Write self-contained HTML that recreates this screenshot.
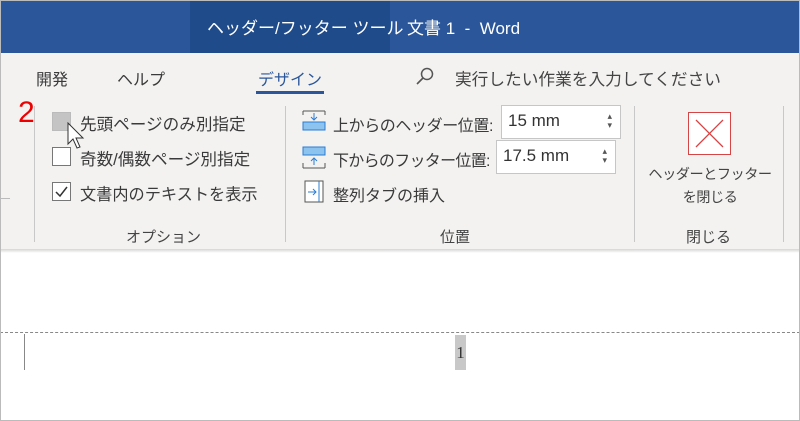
<!DOCTYPE html>
<html><head><meta charset="utf-8"><style>
*{margin:0;padding:0;box-sizing:border-box}
body{width:800px;height:421px;overflow:hidden;background:#fff;font-family:"Liberation Sans","Noto Sans CJK JP",sans-serif;color:#333;position:relative}
.a{position:absolute;white-space:nowrap}
.t{font-size:16px;color:#3a3a3a}
.c{font-size:16.6px;color:#3a3a3a}
.cb{position:absolute;width:19px;height:19px;border:1px solid #777;background:#fff}
.sep{position:absolute;width:1px;background:#c8c8c8}
.inp{position:absolute;background:#fff;border:1px solid #c6c6c6;font-size:17px;color:#333;padding:5px 0 0 6px}
.sp{position:absolute;right:8px;font-size:9px;color:#555;line-height:9px}
</style></head><body>
<div class="a" style="left:0;top:0;width:800px;height:53px;background:#2b579a"></div>
<div class="a" style="left:190px;top:0;width:200px;height:53px;background:#1f4b8a"></div>
<div class="a" style="left:207px;top:14px;font-size:17px;color:#fff">ヘッダー/フッター ツール</div>
<div class="a" style="left:407px;top:14px;font-size:17px;color:#fff">文書 1 &nbsp;- &nbsp;Word</div>
<div class="a" style="left:0;top:53px;width:800px;height:197px;background:#f3f2f1"></div>
<div class="a" style="left:0;top:249px;width:800px;height:4px;background:linear-gradient(#d6d5d4,#fff)"></div>
<div class="a t" style="left:36px;top:66px">開発</div>
<div class="a t" style="left:117px;top:66px">ヘルプ</div>
<div class="a t" style="left:258px;top:66px;color:#2b579a">デザイン</div>
<div class="a" style="left:256px;top:91px;width:68px;height:3px;background:#2b579a"></div>
<svg class="a" style="left:414px;top:66px" width="22" height="20"><circle cx="13" cy="8" r="5.5" fill="none" stroke="#555" stroke-width="1.5"/><line x1="9" y1="12" x2="3" y2="18" stroke="#555" stroke-width="1.6"/></svg>
<div class="a" style="left:455px;top:66px;color:#444;font-size:16.7px">実行したい作業を入力してください</div>
<div class="a" style="left:18px;top:96px;font-size:30px;color:#e00;font-family:'Liberation Sans',sans-serif">2</div>
<div class="sep" style="left:34px;top:106px;height:136px"></div>
<div class="a" style="left:0;top:198px;width:10px;height:1px;background:#bbb"></div>
<div class="cb" style="left:52px;top:112px;background:#c4c4c4;border-color:#bbb"></div>
<svg class="a" style="left:66px;top:122px" width="20" height="32"><path d="M2 1 L2 22 L7 17 L11 26 L14 25 L10 16 L17 16 Z" fill="#fff" stroke="#333" stroke-width="1"/></svg>
<div class="a c" style="left:80px;top:111px">先頭ページのみ別指定</div>
<div class="cb" style="left:52px;top:147px"></div>
<div class="a c" style="left:80px;top:146px">奇数/偶数ページ別指定</div>
<div class="cb" style="left:52px;top:182px"></div>
<svg class="a" style="left:52px;top:182px" width="19" height="19"><path d="M4 10 L8 14 L15 5" fill="none" stroke="#333" stroke-width="1.5"/></svg>
<div class="a" style="left:80px;top:181px;font-size:16.2px;color:#3a3a3a">文書内のテキストを表示</div>
<div class="a" style="left:126px;top:226px;font-size:15px;color:#444">オプション</div>
<div class="sep" style="left:285px;top:106px;height:136px"></div>
<svg class="a" style="left:302px;top:110px" width="24" height="24"><rect x="1" y="12" width="22" height="8" fill="#8cc3ef" stroke="#2b7cd3"/><path d="M1 1v4M23 1v4M1 1h22" stroke="#555" fill="none"/><path d="M12 3v7M9 7l3 3 3-3" stroke="#2b7cd3" fill="none"/></svg>
<div class="a t" style="left:333px;top:112px;letter-spacing:-0.4px">上からのヘッダー位置:</div>
<svg class="a" style="left:302px;top:145px" width="24" height="24"><rect x="1" y="2" width="22" height="8" fill="#8cc3ef" stroke="#2b7cd3"/><path d="M1 18v5M23 18v5M1 23h22" stroke="#555" fill="none"/><path d="M12 20v-7M9 16l3-3 3 3" stroke="#2b7cd3" fill="none"/></svg>
<div class="a t" style="left:333px;top:147px;letter-spacing:-0.7px">下からのフッター位置:</div>
<svg class="a" style="left:304px;top:180px" width="22" height="24"><rect x="1" y="1" width="18" height="21" fill="#fff" stroke="#555"/><path d="M15 1v21" stroke="#2b7cd3"/><path d="M4 12h8M9 9l3 3-3 3" stroke="#2b7cd3" fill="none"/></svg>
<div class="a t" style="left:333px;top:182px">整列タブの挿入</div>
<div class="inp" style="left:501px;top:105px;width:120px;height:34px">15 mm<div class="sp" style="top:6px">▴<br>▾</div></div>
<div class="inp" style="left:496px;top:140px;width:120px;height:34px">17.5 mm<div class="sp" style="top:6px">▴<br>▾</div></div>
<div class="a" style="left:440px;top:226px;font-size:15px;color:#444">位置</div>
<div class="sep" style="left:634px;top:106px;height:136px"></div>
<svg class="a" style="left:688px;top:112px" width="44" height="44"><rect x="0.5" y="0.5" width="42" height="42" fill="#fff" stroke="#d64545"/><path d="M8 8L35 35M35 8L8 35" stroke="#d64545" stroke-width="1.3"/></svg>
<div class="a" style="left:646px;top:164px;width:128px;text-align:center;font-size:14.2px;color:#444;line-height:23px;letter-spacing:-0.5px">ヘッダーとフッター<br>を閉じる</div>
<div class="a" style="left:686px;top:226px;font-size:15px;color:#444">閉じる</div>
<div class="sep" style="left:783px;top:106px;height:136px"></div>
<div class="a" style="left:0;top:332px;width:800px;border-top:1px dashed #888"></div>
<div class="a" style="left:0;top:334px;width:25px;height:36px;border-right:1px solid #888"></div>
<div class="a" style="left:455px;top:335px;width:11px;height:35px;background:#c8c8c8;font-family:'Liberation Serif',serif;font-size:17px;color:#333;text-align:center;padding-top:8px">1</div>
<div class="a" style="left:0;top:0;width:800px;height:421px;border:1px solid #bbb"></div>
</body></html>
